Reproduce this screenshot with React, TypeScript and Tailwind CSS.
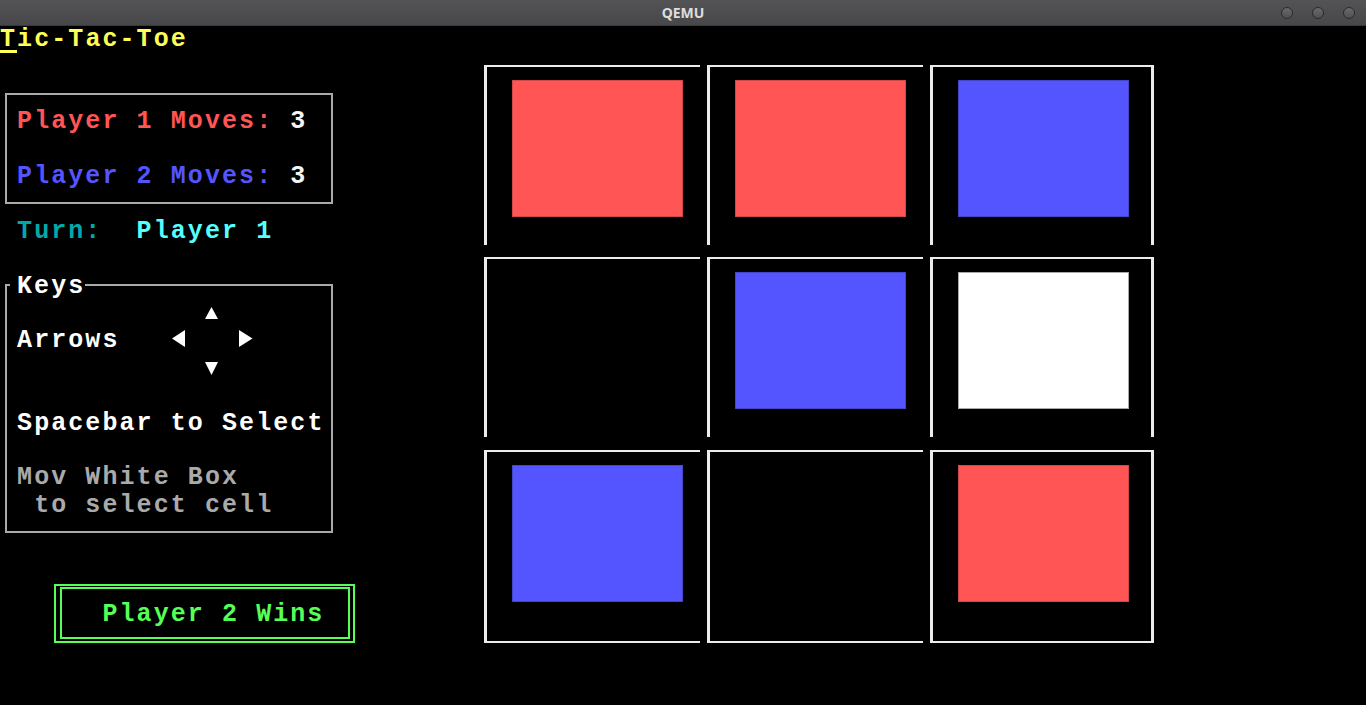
import React from "react";

const mono =
  "font-['Liberation_Mono',monospace] font-bold text-[25px] leading-[27.4px] tracking-[2.075px] whitespace-pre";

type Dir = "up" | "down" | "left" | "right";
const arrowPts: Record<Dir, string> = {
  up: "6.5,7 13,19 0,19",
  down: "0,7 13,7 6.5,20",
  left: "14,3 14,20 1,11.5",
  right: "0,3 0,20 13.5,11.5",
};

function Arrow({ dir }: { dir: Dir }) {
  return (
    <svg width="17.075" height="27.4" viewBox="0 0 17.075 27.4" className="block shrink-0">
      <polygon points={arrowPts[dir]} fill="#ffffff" />
    </svg>
  );
}

type Cell = "r" | "b" | "w" | "e";
const board: Cell[][] = [
  ["r", "r", "b"],
  ["e", "b", "w"],
  ["b", "e", "r"],
];

const fill: Record<Cell, string> = {
  r: "bg-[#ff5555] border border-[#d04848]",
  b: "bg-[#5555ff] border border-[#4545c8]",
  w: "bg-[#ffffff] border border-[#a8a8a8]",
  e: "",
};

function BoardCell({ v, r, c }: { v: Cell; r: number; c: number }) {
  const lastCol = c === 2;
  const lastRow = r === 2;
  const outer = `${lastCol ? "w-[224px]" : "w-[223px]"} ${r === 0 ? "h-[192px]" : "h-[193px]"} shrink-0`;
  const box = [
    "border-l-[3px] border-t-2 border-[#ececec] pl-[25px] pt-[13px]",
    lastCol ? "w-[224px] border-r-[3px]" : "w-[216px]",
    lastRow ? "h-[193px] border-b-2" : "h-[180px]",
  ].join(" ");
  return (
    <div className={outer}>
      <div className={box}>
        {v !== "e" && <div className={`w-[171px] h-[137px] ${fill[v]}`} />}
      </div>
    </div>
  );
}

export default function App() {
  return (
    <div className="w-[1366px] h-[705px] bg-black overflow-hidden flex flex-col">
      {/* QEMU title bar */}
      <div className="h-[26px] shrink-0 grid grid-cols-[1fr_auto_1fr] items-center bg-linear-to-b from-[#545457] to-[#47474a] border-b border-[#38383a]">
        <div />
        <div className="font-['Noto_Sans',sans-serif] font-bold text-[14px] text-[#dedede]">QEMU</div>
        <div className="flex justify-end gap-[19px] pr-[11px]">
          {[0, 1, 2].map((i) => (
            <div
              key={i}
              className="w-[12px] h-[12px] rounded-full bg-linear-to-b from-[#6a6a6c] to-[#505052] border border-[#2a2a2c]"
            />
          ))}
        </div>
      </div>

      {/* screen */}
      <div className="flex flex-1">
        {/* left panel */}
        <div className={`w-[484px] shrink-0 flex flex-col ${mono}`}>
          <div className="h-[27.4px] text-[#ffff55]">
            <span className="inline-block h-[27.4px] border-b-[3px] border-[#ffff55]">T</span>
            ic-Tac-Toe
          </div>

          <div className="ml-[5px] mt-[39.6px] w-[328px] h-[111px] border-2 border-[#aaaaaa] pt-[13.2px] pl-[10.075px]">
            <div className="h-[27.4px]">
              <span className="text-[#ff5555]">Player 1 Moves: </span>
              <span className="text-[#f4f4f4]">3</span>
            </div>
            <div className="h-[27.4px]" />
            <div className="h-[27.4px]">
              <span className="text-[#5555ff]">Player 2 Moves: </span>
              <span className="text-[#f4f4f4]">3</span>
            </div>
          </div>

          <div className="mt-[13.8px] h-[27.4px] pl-[17.075px]">
            <span className="text-[#00aaaa]">Turn:  </span>
            <span className="text-[#55ffff]">Player 1</span>
          </div>

          <div className="relative ml-[5px] mt-[38.8px] w-[328px] h-[249px] border-2 border-[#aaaaaa] pt-[14px] pl-[10.075px]">
            <span className="absolute left-[3px] top-[-13.4px] h-[27.4px] bg-black pl-[7px] text-white">Keys</span>
            <div className="h-[27.4px] flex pl-[187.825px]">
              <Arrow dir="up" />
            </div>
            <div className="h-[27.4px] flex items-start">
              <span className="text-white">Arrows</span>
              <div className="ml-[51.225px]">
                <Arrow dir="left" />
              </div>
              <div className="ml-[51.225px]">
                <Arrow dir="right" />
              </div>
            </div>
            <div className="h-[27.4px] flex pl-[187.825px]">
              <Arrow dir="down" />
            </div>
            <div className="h-[27.4px]" />
            <div className="h-[27.4px] text-white">Spacebar to Select</div>
            <div className="h-[27.4px]" />
            <div className="h-[27.4px] text-[#aaaaaa]">Mov White Box</div>
            <div className="h-[27.4px] text-[#aaaaaa]"> to select cell</div>
          </div>

          <div className="ml-[54px] mt-[51px] w-[301px] h-[59px] border-2 border-[#55ff55] pl-[4px] pr-[3px] py-[1.5px] flex">
            <div className="flex-1 border-2 border-[#55ff55] pl-[40.45px] pt-[11.9px] text-[#55ff55]">
              <div className="h-[27.4px]">Player 2 Wins</div>
            </div>
          </div>
        </div>

        {/* board */}
        <div className="pt-[39px] flex flex-col">
          {board.map((row, r) => (
            <div key={r} className="flex">
              {row.map((v, c) => (
                <BoardCell key={c} v={v} r={r} c={c} />
              ))}
            </div>
          ))}
        </div>
      </div>
    </div>
  );
}
